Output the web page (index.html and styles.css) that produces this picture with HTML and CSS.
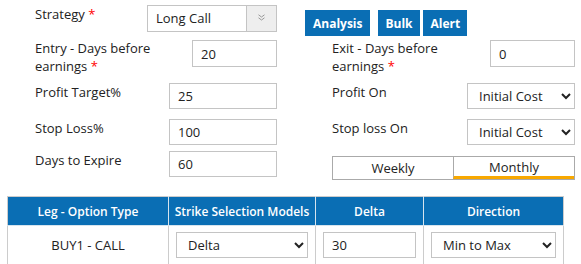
FILE: index.html
```html
<!DOCTYPE html>
<html lang="en">
<head>
    <meta charset="UTF-8">
    <meta name="viewport" content="width=device-width, initial-scale=1.0">
    <title>Strategy Settings</title>
    <link rel="stylesheet" href="styles.css">
</head>
<body>
    <div class="form">
        <div class="row r1">
            <div class="left">
                <label class="lbl">Strategy <span class="req">*</span></label>
                <div class="combo">
                    <span class="combo_text">Long Call</span>
                    <span class="combo_btn">
                        <svg width="7" height="7" viewBox="0 0 7 7"><path d="M0.5 0.8 L3.5 3 L6.5 0.8 M0.5 3.8 L3.5 6 L6.5 3.8" fill="none" stroke="#999" stroke-width="1"/></svg>
                    </span>
                </div>
            </div>
            <div class="right btns">
                <button class="btn">Analysis</button>
                <button class="btn btn_bulk">Bulk</button>
                <button class="btn btn_alert">Alert</button>
            </div>
        </div>
        <div class="row r2">
            <div class="left">
                <label class="lbl lbl_wrap">Entry - Days before earnings <span class="req">*</span></label>
                <input class="field tall w85" type="text" value="20">
            </div>
            <div class="right fields">
                <label class="lbl lbl_wrap">Exit - Days before earnings <span class="req">*</span></label>
                <input class="field tall w85" type="text" value="0">
            </div>
        </div>
        <div class="row r3">
            <div class="left">
                <label class="lbl">Profit Target%</label>
                <input class="field w108" type="text" value="25">
            </div>
            <div class="right fields">
                <label class="lbl">Profit On</label>
                <select class="field w108"><option>Initial Cost</option></select>
            </div>
        </div>
        <div class="row r4">
            <div class="left">
                <label class="lbl">Stop Loss%</label>
                <input class="field w108" type="text" value="100">
            </div>
            <div class="right fields">
                <label class="lbl">Stop loss On</label>
                <select class="field w108"><option>Initial Cost</option></select>
            </div>
        </div>
        <div class="row r5">
            <div class="left">
                <label class="lbl">Days to Expire</label>
                <input class="field w108" type="text" value="60">
            </div>
            <div class="right fields">
                <div class="tabs">
                    <div class="tab">Weekly</div>
                    <div class="tab active">Monthly</div>
                </div>
            </div>
        </div>
    </div>

    <table class="legs">
        <colgroup>
            <col style="width:161px">
            <col style="width:147px">
            <col style="width:108px">
            <col style="width:140px">
        </colgroup>
        <thead>
            <tr>
                <th>Leg - Option Type</th>
                <th>Strike Selection Models</th>
                <th>Delta</th>
                <th>Direction</th>
            </tr>
        </thead>
        <tbody>
            <tr>
                <td>BUY1 - CALL</td>
                <td><select class="field full"><option>Delta</option></select></td>
                <td><input class="field full" type="text" value="30"></td>
                <td><select class="field full"><option>Min to Max</option></select></td>
            </tr>
        </tbody>
    </table>
</body>
</html>
```

FILE: styles.css
```css
body {
    margin: 0;
    font-family: "Open Sans", sans-serif;
    font-size: 13px;
    color: #222;
    background: #fff;
}
.form {
    padding: 5px 0 0 35px;
}
.row {
    display: flex;
}
.r1 { height: 35px; }
.r2 { height: 43px; }
.r3 { height: 36px; }
.r4 { height: 32px; }
.r5 { height: 45px; }

.left {
    width: 242px;
    display: flex;
    justify-content: space-between;
    align-items: flex-start;
}
.right {
    width: 270px;
    margin-left: 28px;
    display: flex;
    align-items: flex-start;
}
.fields {
    justify-content: space-between;
    padding-left: 27px;
    box-sizing: border-box;
}
.lbl {
    line-height: 18px;
}
.lbl_wrap {
    width: 150px;
    margin-top: -1px;
}
.req {
    color: #f00;
}

.field {
    height: 26px;
    box-sizing: border-box;
    border: 1px solid #c4c4c4;
    border-radius: 0;
    padding: 0 8px;
    font: inherit;
    color: #222;
    background: #fff;
    outline: none;
}
.tall { height: 27px; }
.w85 { width: 85px; }
.w108 { width: 108px; }
.full { width: 100%; }
select.field {
    padding: 0 4px 0 7px;
}

.combo {
    width: 130px;
    height: 27px;
    box-sizing: border-box;
    border: 1px solid #c4c4c4;
    display: flex;
}
.combo_text {
    flex: 1;
    padding-left: 8px;
    line-height: 25px;
}
.combo_btn {
    width: 30px;
    background: #eee;
    border-left: 1px solid #c4c4c4;
    display: flex;
    align-items: center;
    justify-content: center;
    padding-bottom: 2px;
    box-sizing: border-box;
}

.btns {
    padding-top: 5px;
}
.btn {
    background-color: #0a6eb4;
    border: none;
    color: #fff;
    font-family: "Open Sans", sans-serif;
    font-size: 12px;
    font-weight: 700;
    height: 26px;
    padding: 0 7px 0 8px;
    cursor: pointer;
}
.btn_bulk { margin-left: 8px; }
.btn_alert { margin-left: 3px; }

.tabs {
    margin-top: 5px;
    width: 243px;
    height: 24px;
    box-sizing: border-box;
    border: 1px solid #aaa;
    display: flex;
}
.tab {
    flex: 1;
    text-align: center;
    line-height: 22px;
    box-sizing: border-box;
}
.tab + .tab {
    border-left: 1px solid #aaa;
}
.tab.active {
    border-bottom: 3px solid #f8a800;
    line-height: 20px;
}

.legs {
    margin-left: 7px;
    width: 556px;
    table-layout: fixed;
    border-collapse: collapse;
}
.legs th {
    background: #0a6eb4;
    color: #fff;
    font-size: 12px;
    font-weight: 600;
    height: 28px;
    padding: 0;
    border: 1px solid #d6e4ee;
    border-top-color: #ccc;
}
.legs th:first-child { border-left-color: #ccc; }
.legs th:last-child { border-right-color: #ccc; }
.legs td {
    border: 1px solid #ccc;
    padding: 6px 7px 8px 7px;
    text-align: center;
}
```
